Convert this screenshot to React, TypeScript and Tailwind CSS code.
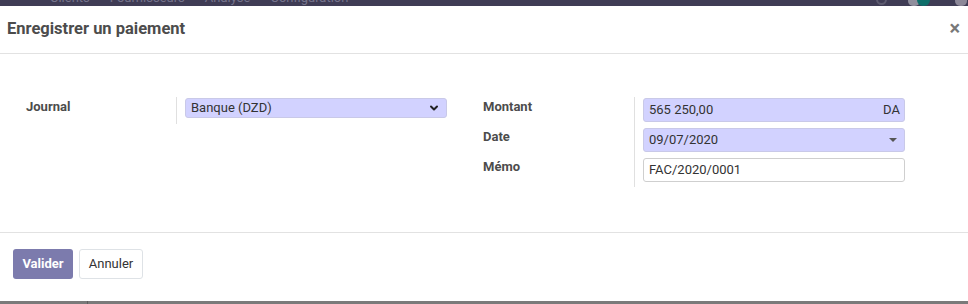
import { ChevronDown } from 'lucide-react'

const font = { fontFamily: 'Roboto, "Noto Sans", sans-serif' }

function FieldLabel({ children }: { children: string }) {
  return <div className="h-6 leading-[18px] text-[13px] font-bold text-[#4c4c4c]">{children}</div>
}

export default function App() {
  return (
    <div className="w-[968px] h-[304px] overflow-hidden bg-white flex flex-col" style={font}>
      {/* navbar behind the backdrop */}
      <div className="h-[6px] bg-[#3f3c55] overflow-hidden relative shrink-0">
        <div className="absolute left-[50px] -top-[10px] flex gap-[20px] text-[13px] leading-[15px] text-[#76748c]">
          <span>Clients</span>
          <span>Fournisseurs</span>
          <span>Analyse</span>
          <span>Configuration</span>
        </div>
        <div className="absolute left-[876px] -top-[6px] w-[11px] h-[11px] rounded-full border-2 border-[#5d5b70]" />
        <div className="absolute left-[908px] -top-[4px] w-[12px] h-[10px] rounded-full bg-[#8f8e9c]" />
        <div className="absolute left-[917px] -top-[6px] w-[13px] h-[12px] rounded-full bg-[#0d6e6a]" />
        <div className="absolute left-[955px] -top-[4px] w-[12px] h-[10px] rounded-full bg-[#8c8898]" />
      </div>

      <div className="flex-1 flex flex-col">
        {/* header */}
        <div className="h-[48px] border-b border-[#e2e2e2] flex items-center justify-between pl-[7px] pr-[8px] shrink-0">
          <h4 className="text-[16.5px] font-bold text-[#4c4c4c]">Enregistrer un paiement</h4>
          <span className="text-[20px] leading-none font-bold text-[#787878] -mt-[3px]">×</span>
        </div>

        {/* body */}
        <div className="h-[179px] border-b border-[#e2e2e2] pt-[44px] pl-[26px] flex shrink-0">
          <div className="w-[150px]">
            <div className="h-5 leading-[18px] text-[13px] font-bold text-[#4c4c4c]">Journal</div>
          </div>
          <div className="border-l border-[#e0e0e0] h-[27px] -mt-[1px] pl-2">
            <div className="mt-[1px] w-[262px] h-5 bg-[#d2d2ff] border border-[#c9c9e8] rounded-[3px] flex items-center justify-between pl-[5px] pr-[6px] text-[13px] text-[#333]">
              <span>Banque (DZD)</span>
              <ChevronDown size={12} strokeWidth={4} className="text-[#222]" />
            </div>
          </div>

          <div className="ml-[36px] w-[151px] flex flex-col gap-[6px]">
            <FieldLabel>Montant</FieldLabel>
            <FieldLabel>Date</FieldLabel>
            <FieldLabel>Mémo</FieldLabel>
          </div>
          <div className="border-l border-[#e0e0e0] h-[90px] -mt-[1px] pl-2 pt-[1px] flex flex-col gap-[6px]">
            <div className="w-[262px] h-6 bg-[#d2d2ff] border border-[#c9c9e8] rounded-[3px] flex items-center justify-between pl-[5px] pr-[4px] text-[13px] text-[#333]">
              <span>565 250,00</span>
              <span>DA</span>
            </div>
            <div className="w-[262px] h-6 bg-[#d2d2ff] border border-[#c9c9e8] rounded-[3px] flex items-center justify-between pl-[5px] pr-[7px] text-[13px] text-[#333]">
              <span>09/07/2020</span>
              <span className="w-0 h-0 border-l-[4px] border-r-[4px] border-t-[4px] border-l-transparent border-r-transparent border-t-[#555]" />
            </div>
            <div className="w-[262px] h-6 bg-white border border-[#cfcfcf] rounded-[3px] flex items-center pl-[5px] text-[13px] text-[#333]">
              FAC/2020/0001
            </div>
          </div>
        </div>

        {/* footer */}
        <div className="flex-1 flex items-start gap-[6px] pl-[13px] pt-[16px]">
          <button className="h-[30px] w-[60px] rounded-[3px] bg-[#7c7bad] text-white text-[13px] font-bold">Valider</button>
          <button className="h-[30px] w-[64px] rounded-[3px] bg-white border border-[#dee2e6] text-[#333] text-[13px]">Annuler</button>
        </div>
      </div>

      {/* page behind the backdrop */}
      <div className="h-[3px] bg-[#7a7a7a] flex shrink-0">
        <div className="w-[88px] border-r border-[#5e5e5e]" />
      </div>
    </div>
  )
}
